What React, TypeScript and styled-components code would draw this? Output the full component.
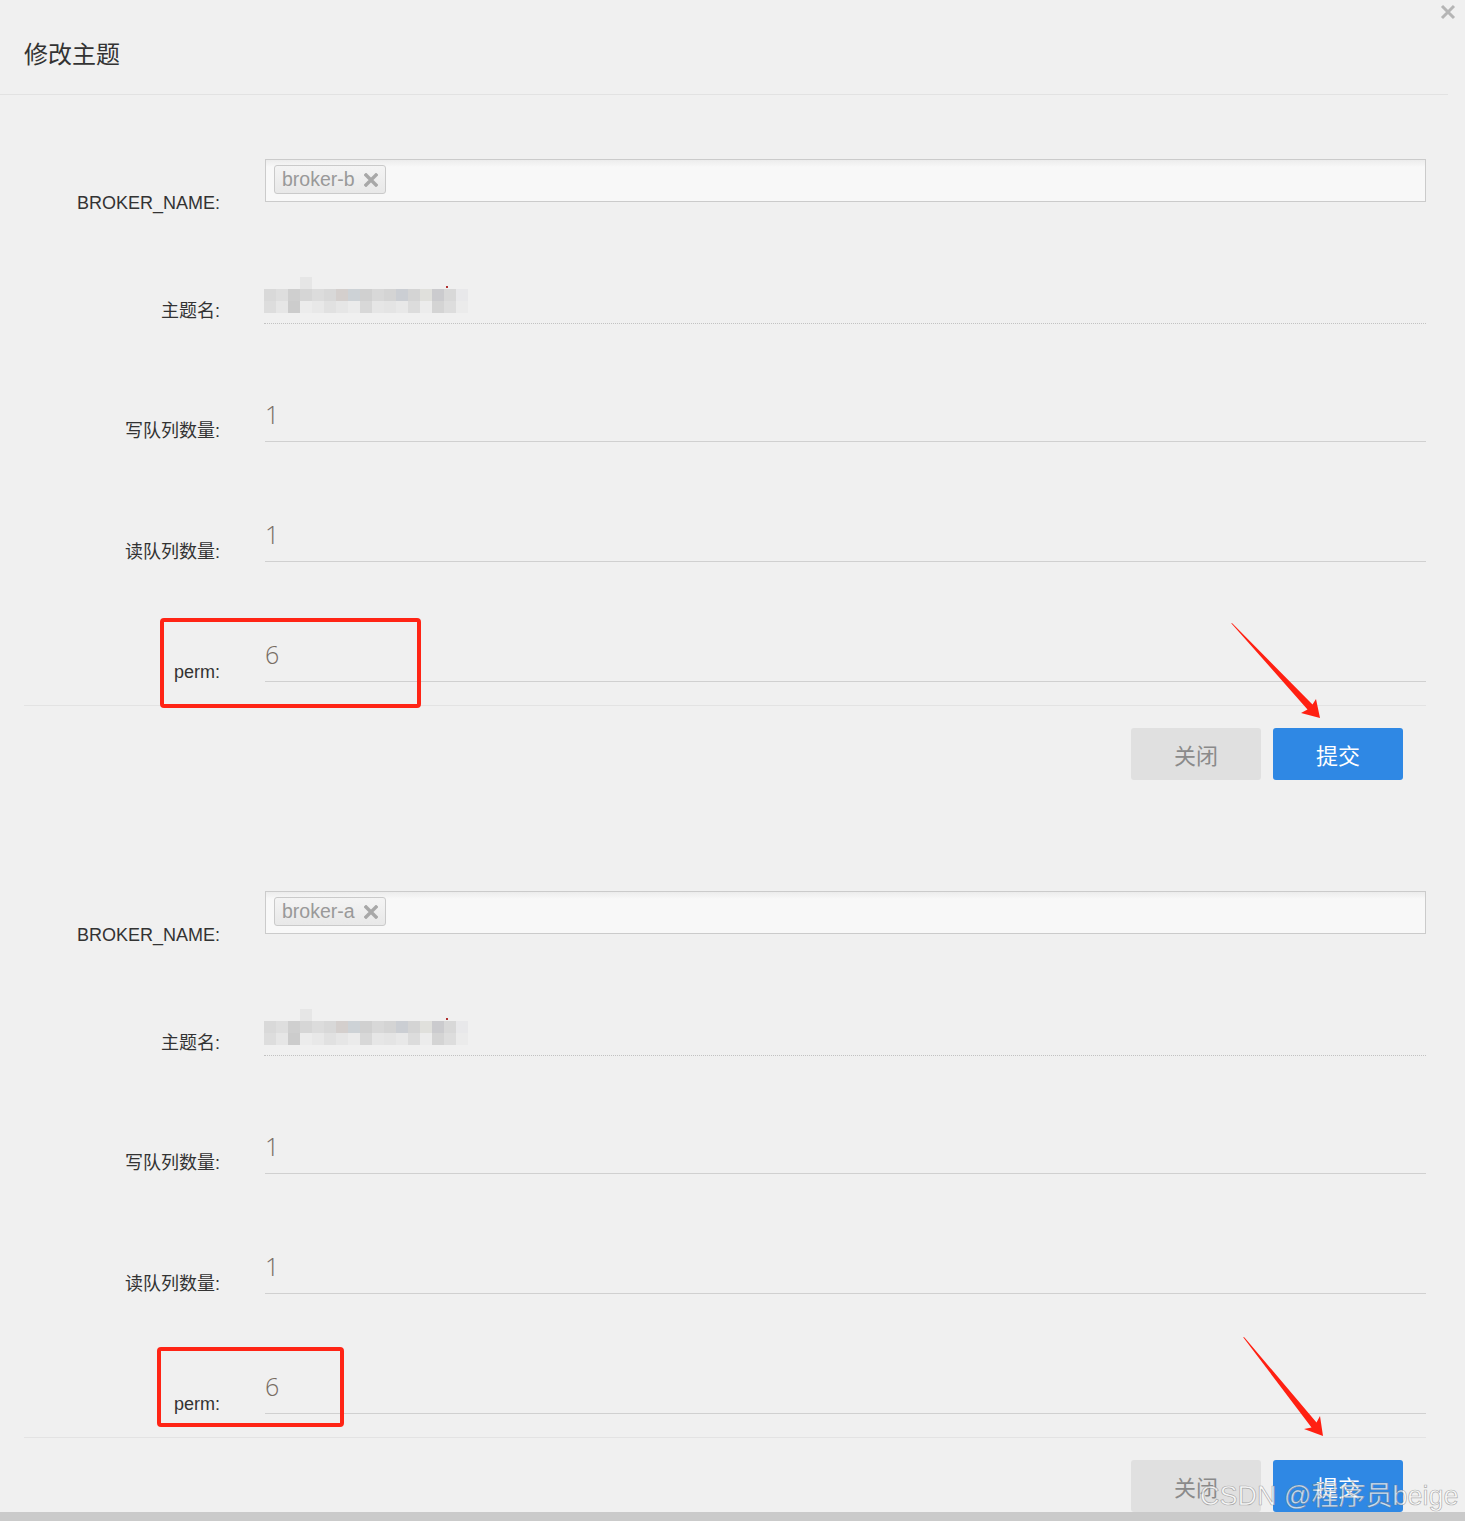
import React from "react";
import styled, { createGlobalStyle } from "styled-components";

const GlobalStyle = createGlobalStyle`
  html, body { margin: 0; padding: 0; background: #f0f0f0; }
  body { font-family: "Liberation Sans", "Noto Sans CJK SC", sans-serif; }
  * { box-sizing: border-box; }
`;

const Page = styled.div`
  position: relative;
  width: 1465px;
  height: 1521px;
  overflow: hidden;
  background: #f0f0f0;
`;

const Modal = styled.section<{ $offset?: number }>`
  position: relative;
  width: 1448px;
  margin-top: ${(p) => p.$offset ?? 0}px;
`;

const Header = styled.header`
  position: relative;
  height: 95px;
  border-bottom: 1px solid #e2e2e2;
  display: flex;
  align-items: center;
  padding: 12px 0 0 24px;
`;

const Title = styled.h4`
  margin: 0;
  font-family: "Noto Sans CJK SC", sans-serif;
  font-weight: 400;
  font-size: 24px;
  line-height: 30px;
  color: #333;
`;

const CloseButton = styled.button`
  position: absolute;
  top: 4px;
  right: -8px;
  width: 16px;
  height: 16px;
  padding: 0;
  border: 0;
  background: transparent;
  display: block;
`;

const Body = styled.div`
  padding: 0 22px 23px 0;
`;

const Row = styled.div<{ $h: number }>`
  display: grid;
  grid-template-columns: 220px 1fr;
  column-gap: 45px;
  align-items: end;
  height: ${(p) => p.$h}px;
`;

const Label = styled.label<{ $shift: number }>`
  text-align: right;
  font-size: 18px;
  line-height: 20px;
  color: #333;
  font-family: "Liberation Sans", "Noto Sans CJK SC", sans-serif;
  transform: translateY(${(p) => p.$shift}px);
`;

const SelectBox = styled.div`
  height: 43px;
  border: 1px solid #cbcbcb;
  background: linear-gradient(to bottom, #ececec 0, #f8f8f8 7px, #f8f8f8 100%);
  padding: 5px 8px;
  display: flex;
  align-items: flex-start;
`;

const Tag = styled.span`
  display: inline-flex;
  align-items: center;
  gap: 9px;
  height: 29px;
  padding: 0 7px 0 7px;
  border: 1px solid #cacaca;
  border-radius: 3px;
  background: linear-gradient(to bottom, #f4f4f4, #e8e8e8);
  font-family: "Liberation Sans", sans-serif;
  font-size: 19.5px;
  color: #999;
`;

const MosaicField = styled.div`
  padding-bottom: 10px;
  border-bottom: 1px dotted #c2c2c2;
  margin-left: -1px;
`;

const NumberField = styled.div`
  font-family: "Open Sans", sans-serif;
  font-weight: 300;
  font-size: 25px;
  line-height: 24px;
  color: #776c63;
  padding-bottom: 15px;
  border-bottom: 1px solid #d0d0d0;
`;

const Footer = styled.footer`
  margin: 0 22px 0 24px;
  border-top: 1px solid #e3e3e3;
  display: flex;
  justify-content: flex-end;
  gap: 12px;
  padding: 22px 23px 0 0;
`;

const Button = styled.button<{ $primary?: boolean }>`
  width: 130px;
  height: 52px;
  border: 0;
  border-radius: 3px;
  font-family: "Noto Sans CJK SC", sans-serif;
  font-size: 22px;
  background: ${(p) => (p.$primary ? "#2f88e4" : "#e0e0e0")};
  color: ${(p) => (p.$primary ? "#ffffff" : "#8a8a8a")};
  display: flex;
  align-items: center;
  justify-content: center;
  padding: 0;
`;

const BottomBar = styled.div`
  height: 9px;
  background: #cacaca;
`;

const RedBox = styled.div<{ $x: number; $y: number; $w: number; $h: number }>`
  position: absolute;
  left: ${(p) => p.$x}px;
  top: ${(p) => p.$y}px;
  width: ${(p) => p.$w}px;
  height: ${(p) => p.$h}px;
  border: 4px solid #ff2415;
  border-radius: 4px;
  pointer-events: none;
`;

const ArrowLayer = styled.svg`
  position: absolute;
  left: 0;
  top: 0;
  pointer-events: none;
`;

const Watermark = styled.div`
  position: absolute;
  left: 1200px;
  top: 1483px;
  font-family: "Liberation Sans", "Noto Sans CJK SC", sans-serif;
  font-size: 27px;
  line-height: 27px;
  white-space: nowrap;
  color: rgba(255, 255, 255, 0.72);
  -webkit-text-stroke: 0.7px rgba(110, 110, 110, 0.55);
  pointer-events: none;
`;

const rowA = [
  "#d9d9d9", "#dedede", "#cfcfcf", "#d6d6d6", "#dcdcdc", "#d8d8d8", "#d4cfcd", "#cdd2d6", "#d0d0d0",
  "#d8d8d8", "#d4d4d4", "#cbced3", "#d4d4d4", "#e0e0dc", "#cbcbce", "#d8d8d8", "#e8e8ea",
];
const rowB = [
  "#dddddd", "#e6e6e6", "#cccccc", "#ececec", "#e8e8e8", "#e1e1e1", "#e6e6e6", "#ebebeb", "#d8d8d8",
  "#e6e6e6", "#e4e4e4", "#e8e8e8", "#dcdcdc", "#ececec", "#d4d4d4", "#dddddd", "#ebebeb",
];

const Mosaic = () => (
  <svg width="205" height="36" viewBox="0 0 205 36" style={{ display: "block" }}>
    <rect x="36" y="0" width="12" height="12" fill="#e6e6e6" />
    {rowA.map((c, i) => (
      <rect key={"a" + i} x={i * 12} y="12" width="12" height="12" fill={c} />
    ))}
    {rowB.map((c, i) => (
      <rect key={"b" + i} x={i * 12} y="24" width="12" height="12" fill={c} />
    ))}
    <rect x="182" y="9" width="2" height="2" fill="#b03030" />
  </svg>
);

const RemoveIcon = () => (
  <svg width="14" height="14" viewBox="0 0 14 14">
    <path d="M2 2 L12 12 M12 2 L2 12" stroke="#a8a8a8" strokeWidth="3.4" strokeLinecap="square" />
  </svg>
);

const TopicForm: React.FC<{ broker: string }> = ({ broker }) => (
  <Body>
    <Row $h={107}>
      <Label $shift={11}>BROKER_NAME:</Label>
      <SelectBox>
        <Tag>
          {broker}
          <RemoveIcon />
        </Tag>
      </SelectBox>
    </Row>
    <Row $h={122}>
      <Label $shift={-3}>主题名:</Label>
      <MosaicField>
        <Mosaic />
      </MosaicField>
    </Row>
    <Row $h={118}>
      <Label $shift={-1}>写队列数量:</Label>
      <NumberField>1</NumberField>
    </Row>
    <Row $h={120}>
      <Label $shift={0}>读队列数量:</Label>
      <NumberField>1</NumberField>
    </Row>
    <Row $h={120}>
      <Label $shift={0}>perm:</Label>
      <NumberField>6</NumberField>
    </Row>
  </Body>
);

const ModalFooter = () => (
  <Footer>
    <Button>关闭</Button>
    <Button $primary>提交</Button>
  </Footer>
);

export default function App() {
  return (
    <Page>
      <GlobalStyle />
      <Modal>
        <Header>
          <Title>修改主题</Title>
          <CloseButton aria-label="close">
            <svg width="16" height="16" viewBox="0 0 16 16">
              <path d="M2 2 L14 14 M14 2 L2 14" stroke="#b5b5b5" strokeWidth="3" />
            </svg>
          </CloseButton>
        </Header>
        <TopicForm broker="broker-b" />
        <ModalFooter />
      </Modal>
      <Modal $offset={47}>
        <TopicForm broker="broker-a" />
        <ModalFooter />
      </Modal>
      <BottomBar />

      <RedBox $x={160} $y={618} $w={261} $h={90} />
      <RedBox $x={157} $y={1347} $w={187} $h={80} />
      <ArrowLayer width="1465" height="1521" viewBox="0 0 1465 1521">
        <polygon
          points="1231,623 1232.5,623.5 1312.5,704.5 1316,699 1320,718 1301,713 1307.5,709.5"
          fill="#ff2012"
        />
        <polygon
          points="1243,1337 1244.5,1337.5 1316.5,1422.5 1320,1416 1323,1436 1304,1429 1311.5,1427.5"
          fill="#ff2012"
        />
      </ArrowLayer>
      <Watermark>CSDN @程序员beige</Watermark>
    </Page>
  );
}
